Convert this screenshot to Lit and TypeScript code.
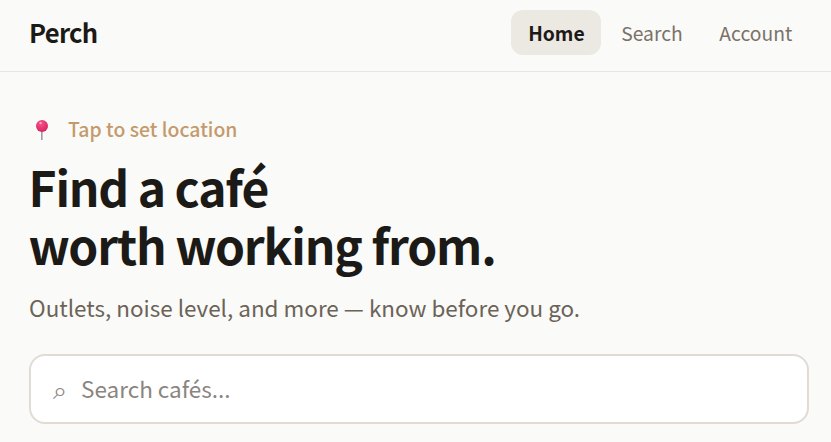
import {LitElement, html, css} from 'lit';
import {customElement} from 'lit/decorators.js';

@customElement('app-root')
export class AppRoot extends LitElement {
  static override styles = css`
    :host {
      display: block;
      height: 442px;
      overflow: hidden;
      background: #fafaf8;
      font-family: "Noto Sans CJK JP", "Noto Sans CJK SC", sans-serif;
      color: #1c1a17;
    }
    header {
      display: flex;
      align-items: center;
      justify-content: space-between;
      height: 71px;
      padding: 0 22px 0 29px;
      border-bottom: 1px solid #e8e6e1;
    }
    .logo { font-size: 25.6px; font-weight: 700; letter-spacing: -0.7px; margin-top: -9px; }
    nav { display: flex; gap: 3px; margin-top: -6px; }
    nav a {
      height: 45px;
      padding: 0 16.8px;
      box-sizing: border-box;
      display: flex;
      align-items: center;
      font-size: 19.3px;
      color: #7a7268;
      border-radius: 12px;
    }
    nav a.on { background: #ece9e3; color: #1c1a17; font-weight: 700; }
    main { padding: 41px 22px 0 29px; }
    .loc { display: flex; align-items: center; gap: 16px; height: 30px; font-size: 19.4px; font-weight: 500; color: #c49a6c; }
    .pin { width: 23px; height: 24px; flex: none; }
    h1 { margin: 14px 0 0 -0.5px; font-size: 48px; line-height: 58px; font-weight: 700; letter-spacing: -1.2px; }
    p { margin: 19px 0 0; font-size: 22.45px; line-height: 30px; color: #6b6358; }
    .search {
      display: flex;
      align-items: center;
      gap: 14px;
      margin-top: 32px;
      height: 70px;
      box-sizing: border-box;
      padding: 0 22px 2px;
      background: #fff;
      border: 2px solid #e0dcd4;
      border-radius: 16px;
      font-size: 22.5px;
      color: #8a8580;
    }
    .glyph { font-size: 25px; color: #8a8580; }
  `;

  override render() {
    return html`
      <header>
        <div class="logo">Perch</div>
        <nav>
          <a class="on">Home</a>
          <a>Search</a>
          <a>Account</a>
        </nav>
      </header>
      <main>
        <div class="loc">
          <svg class="pin" viewBox="0 0 23 24">
            <defs>
              <radialGradient id="ball" cx="0.42" cy="0.3" r="0.75">
                <stop offset="0" stop-color="#f4558a"/>
                <stop offset="1" stop-color="#d81f5e"/>
              </radialGradient>
            </defs>
            <rect x="12" y="14" width="1.6" height="10" fill="#a09ab0"/>
            <circle cx="13" cy="10" r="6" fill="url(#ball)"/>
            <circle cx="11.5" cy="7" r="1.2" fill="#f9a8c4"/>
          </svg>
          <span>Tap to set location</span>
        </div>
        <h1>Find a café<br>worth working from.</h1>
        <p>Outlets, noise level, and more — know before you go.</p>
        <div class="search"><span class="glyph">⌕</span><span>Search cafés...</span></div>
      </main>
    `;
  }
}
